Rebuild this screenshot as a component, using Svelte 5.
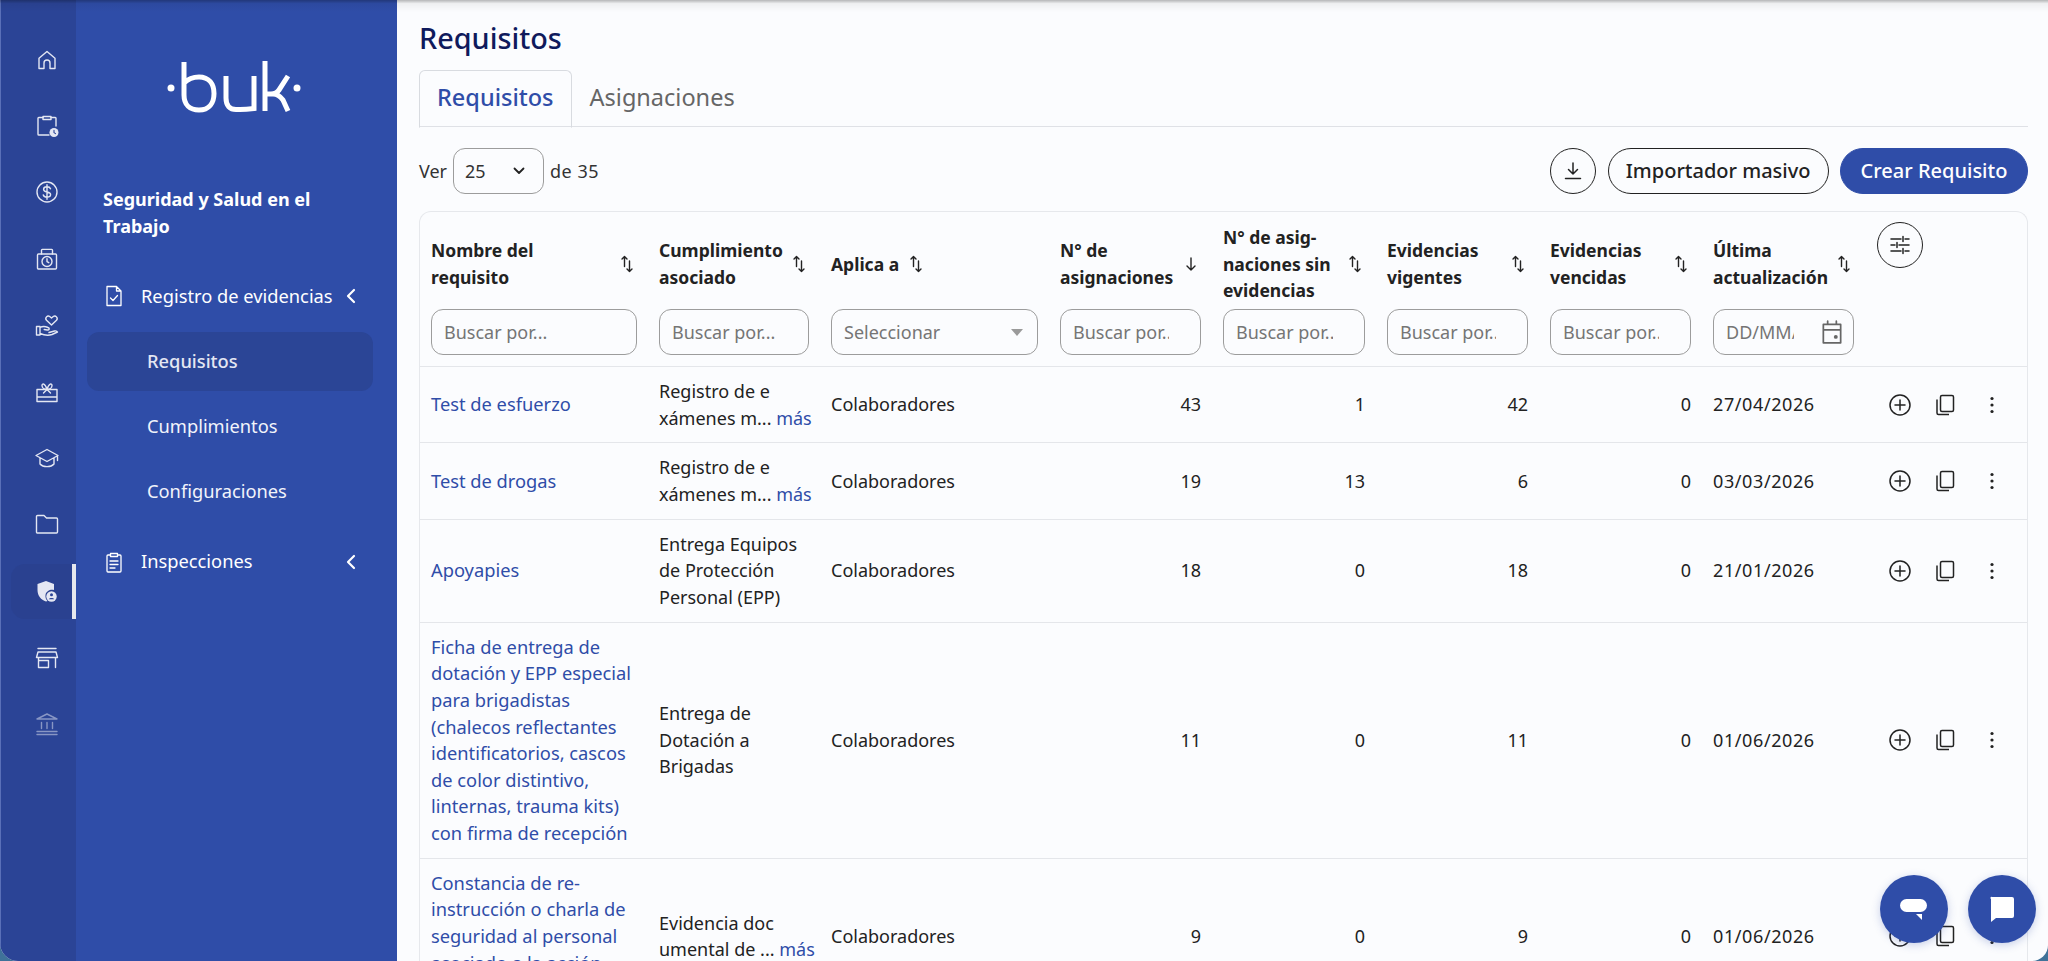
<script>
	const railIcons = ['home', 'clip', 'money', 'lock', 'care', 'gift', 'cap', 'folder', 'shield', 'store', 'bank'];

	const filters = [
		{ label: ['Nombre del', 'requisito'], sort: 'both' },
		{ label: ['Cumplimiento', 'asociado'], sort: 'both' },
		{ label: ['Aplica a'], sort: 'both', near: true, kind: 'select' },
		{ label: ['N° de', 'asignaciones'], sort: 'down' },
		{ label: ['N° de asig-', 'naciones sin', 'evidencias'], sort: 'both' },
		{ label: ['Evidencias', 'vigentes'], sort: 'both' },
		{ label: ['Evidencias', 'vencidas'], sort: 'both' },
		{ label: ['Última', 'actualización'], sort: 'both', kind: 'date' }
	];

	const rows = [
		{ name: ['Test de esfuerzo'], comp: ['Registro de e', 'xámenes m...'], more: true, n: [43, 1, 42, 0], date: '27/04/2026' },
		{ name: ['Test de drogas'], comp: ['Registro de e', 'xámenes m...'], more: true, n: [19, 13, 6, 0], date: '03/03/2026' },
		{ name: ['Apoyapies'], comp: ['Entrega Equipos', 'de Protección', 'Personal (EPP)'], n: [18, 0, 18, 0], date: '21/01/2026' },
		{
			name: ['Ficha de entrega de', 'dotación y EPP especial', 'para brigadistas', '(chalecos reflectantes', 'identificatorios, cascos', 'de color distintivo,', 'linternas, trauma kits)', 'con firma de recepción'],
			comp: ['Entrega de', 'Dotación a', 'Brigadas'], n: [11, 0, 11, 0], date: '01/06/2026'
		},
		{
			name: ['Constancia de re-', 'instrucción o charla de', 'seguridad al personal', 'asociado a la acción', 'correctiva'],
			comp: ['Evidencia doc', 'umental de ...'], more: true, n: [9, 0, 9, 0], date: '01/06/2026'
		}
	];
</script>

{#snippet railIcon(name)}
	<svg viewBox="0 0 24 24" width="24" height="24" fill="none" stroke="currentColor" stroke-width="1.4" stroke-linecap="round" stroke-linejoin="round">
		{#if name === 'home'}
			<path d="M4 20.5V10.2L12 3.5l8 6.7v10.3h-5V15a3 3 0 0 0-6 0v5.500z" />
		{:else if name === 'clip'}
			<path d="M8 3.500H3.800a.8.8 0 0 0-.8.8v15.900a.8.8 0 0 0 .8.8H14M16 3.500h4.200a.8.8 0 0 1 .8.8V12" />
			<path d="M8 2.500h8V5.500H8z" />
			<circle cx="19" cy="18.500" r="4.500" fill="currentColor" stroke="none" />
			<path d="M19 16.200v2.400l1.500 1" stroke="#2b4496" stroke-width="1.100" />
		{:else if name === 'money'}
			<circle cx="12" cy="12" r="10" />
			<path d="M15.500 8.800C15 7.300 13.600 6.800 12 6.800c-1.900 0-3.400 1-3.400 2.600 0 3.500 7 1.700 7 5.200 0 1.600-1.600 2.600-3.600 2.600-1.700 0-3.200-.7-3.700-2.200M12 4.800v14.400" />
		{:else if name === 'lock'}
			<rect x="2.500" y="7" width="19" height="15" rx="1" />
			<path d="M6.500 7V3.200a.8.800 0 0 1 .8-.8h9.400a.8.800 0 0 1 .8.8V7" />
			<circle cx="12" cy="14.500" r="5" />
			<path d="M12 11.800v2.900l1.800 1" />
		{:else if name === 'care'}
			<path d="M16.500 12l-5-4.800c-2-2.200 1-5.500 3.200-3.700l1.800 1.600 1.800-1.600c2.200-1.800 5.200 1.500 3.200 3.700z" />
			<path d="M1.500 13.500H5V22H1.500zM5 14.500c3-1.800 5-1.400 8 0 2 .8 1.200 2.800-.8 2.500l-3-.5M5 20.500c4 1.700 9 2 12 1l5.500-2.500c-.5-1-1.500-1.400-3-1l-5.500 1.500" />
		{:else if name === 'gift'}
			<path d="M2 9.500h20V21.500H2zM2 17h20" />
			<path d="M12 9.500C9 9.500 7 7.500 7 5.500c0-2.200 3-2.500 5 4 2-6.500 5-6.200 5-4 0 2-2 4-5 4zM12 9.500l-3.500 3.500M12 9.500l3.500 3.500" />
		{:else if name === 'cap'}
			<path d="M12 3.500L23 9.500l-11 6-11-6zM5 12v6c3 3.500 11 3.500 14 0v-6M22.500 9.500v5" />
		{:else if name === 'folder'}
			<path d="M1.500 4.500a1 1 0 0 1 1-1H9l2.500 2.500h10a1 1 0 0 1 1 1V20a1 1 0 0 1-1 1h-19a1 1 0 0 1-1-1z" />
		{:else if name === 'shield'}
			<path d="M12 2l8 3v6c-3.500-1-8 1-8.500 5-.3 2.500.5 4.500 2 6-.5.300-1 .5-1.500.5C7 21 3.500 16.500 3.500 11V5z" fill="currentColor" stroke="none" />
			<circle cx="17.500" cy="17.500" r="5.200" fill="currentColor" stroke="none" />
			<circle cx="17.500" cy="15.800" r="1.500" fill="#2b4496" stroke="none" />
			<path d="M14.800 20.300c.6-1.800 4.800-1.800 5.400 0z" fill="#2b4496" stroke="none" />
		{:else if name === 'store'}
			<path d="M3 2.500h18M3 6h18l1.500 5.500h-21zM3.500 11.500V21.500h10V14.500H3.500M20.500 11.500V21.500" />
		{:else}
			<path d="M12 2l10 5H2zM2 22.500h20M2 19.500h20M6.500 10.500v6M12 10.500v6M17.500 10.500v6" />
		{/if}
	</svg>
{/snippet}

{#snippet sortIcon(kind)}
	<svg class="sort" viewBox="0 0 20 20" width="20" height="20" fill="none" stroke="#222" stroke-width="1.400" stroke-linecap="round" stroke-linejoin="round">
		{#if kind === 'down'}
			<path d="M10 4v12M6 12l4 4 4-4" />
		{:else}
			<path d="M7.500 2.500v10M5 5L7.500 2.500 10 5" />
			<path d="M12.500 7v10.500M10 15l2.500 2.500 2.500-2.500" />
		{/if}
	</svg>
{/snippet}

<div class="shell">
	<nav class="rail">
		{#each railIcons as icon}
			<a class="rail-item" class:active={icon === 'shield'} class:off={icon === 'bank'} href="#top" aria-label={icon}>
				{@render railIcon(icon)}
			</a>
		{/each}
	</nav>

	<aside class="sidebar">
		<div class="logo">
			<svg viewBox="0 0 136 54" width="136" height="54" fill="none" stroke="#fff" stroke-width="5" aria-label="buk">
				<circle cx="4" cy="28" r="3.500" fill="#fff" stroke="none" />
				<path d="M17 2v33c0 10 6 15 15 15 10 0 15-7 15-16.500S42 17 32 17c-6 0-11 2-15 6" />
				<path d="M59 16v22c0 8 4 11.500 10 11.500h4c6 0 14-1 14-1V16" />
				<path d="M98 1v50M98 34h6c4 0 6-1 8-4l9-14M106 34c4 0 7 2 10 6l5 11" />
				<circle cx="130" cy="28" r="3.500" fill="#fff" stroke="none" />
			</svg>
		</div>

		<h2 class="module">Seguridad y Salud en el<br />Trabajo</h2>

		<div class="group">
			<svg viewBox="0 0 24 24" width="24" height="24" fill="none" stroke="#fff" stroke-width="1.300" stroke-linejoin="round" stroke-linecap="round">
				<path d="M5 2.500h9.500L19 7v14.500H5zM14.500 2.500V7H19M8.500 14l2.500 2.500 4.500-5" />
			</svg>
			<span>Registro de evidencias</span>
			<svg class="chev" viewBox="0 0 12 18" width="12" height="18" fill="none" stroke="#fff" stroke-width="2.200" stroke-linecap="round" stroke-linejoin="round"><path d="M9 3L3 9l6 6" /></svg>
		</div>
		<a class="sub active" href="#top">Requisitos</a>
		<a class="sub" href="#top">Cumplimientos</a>
		<a class="sub" href="#top">Configuraciones</a>
		<div class="group second">
			<svg viewBox="0 0 24 24" width="24" height="24" fill="none" stroke="#fff" stroke-width="1.300" stroke-linejoin="round" stroke-linecap="round">
				<path d="M8.500 5H6a1 1 0 0 0-1 1v15a1 1 0 0 0 1 1h12a1 1 0 0 0 1-1V6a1 1 0 0 0-1-1h-2.500" />
				<path d="M8.500 3.500h7v3h-7zM8 11h8M8 14.500h8M8 18h5" />
			</svg>
			<span>Inspecciones</span>
			<svg class="chev" viewBox="0 0 12 18" width="12" height="18" fill="none" stroke="#fff" stroke-width="2.200" stroke-linecap="round" stroke-linejoin="round"><path d="M9 3L3 9l6 6" /></svg>
		</div>
	</aside>

	<main class="main">
		<h1>Requisitos</h1>

		<div class="tabs">
			<button class="tab active">Requisitos</button>
			<button class="tab">Asignaciones</button>
		</div>

		<div class="toolbar">
			<div class="pager">
				<span>Ver</span>
				<div class="page-select">
					<span>25</span>
					<svg viewBox="0 0 12 8" width="12" height="8" fill="none" stroke="#222" stroke-width="1.800" stroke-linecap="round" stroke-linejoin="round"><path d="M1.500 1.500L6 6l4.500-4.500" /></svg>
				</div>
				<span class="total">de 35</span>
			</div>
			<div class="buttons">
				<button class="round" aria-label="Descargar">
					<svg viewBox="0 0 24 24" width="24" height="24" fill="none" stroke="#222" stroke-width="1.500" stroke-linecap="round" stroke-linejoin="round">
						<path d="M12 4v11M7.500 10.500L12 15l4.500-4.500M4.500 19.500h15" />
					</svg>
				</button>
				<button class="pill">Importador masivo</button>
				<button class="pill primary">Crear Requisito</button>
			</div>
		</div>

		<div class="card">
			<table>
				<colgroup>
					<col style="width: 228px" />
					<col style="width: 172px" />
					<col style="width: 229px" />
					<col style="width: 163px" />
					<col style="width: 164px" />
					<col style="width: 163px" />
					<col style="width: 163px" />
					<col style="width: 163px" />
					<col />
				</colgroup>
				<thead>
					<tr>
						{#each filters as f}
							<th>
								<div class="head" class:near={f.near}>
									<span>
										{#each f.label as line, i}{#if i > 0}<br />{/if}{line}{/each}
									</span>
									{@render sortIcon(f.sort)}
								</div>
								{#if f.kind === 'select'}
									<div class="field select">
										<span>Seleccionar</span>
										<i class="caret"></i>
									</div>
								{:else if f.kind === 'date'}
									<div class="field date">
										<span>DD/MM/AAAA</span>
										<svg viewBox="0 0 24 24" width="26" height="26" fill="none" stroke="#666" stroke-width="1.600" stroke-linecap="round" stroke-linejoin="round">
											<path d="M4 5h16v17H4zM4 10h16M8 2v3M16 2v3" />
											<circle cx="15.500" cy="16.500" r="1.800" fill="#666" stroke="none" />
										</svg>
									</div>
								{:else}
									<input class="field" placeholder="Buscar por..." />
								{/if}
							</th>
						{/each}
						<th class="tools">
							<button class="round" aria-label="Columnas">
								<svg viewBox="0 0 24 24" width="24" height="24" fill="none" stroke="#222" stroke-width="1.500" stroke-linecap="round">
									<path d="M3 6h10M17 6h4M15 3.500v5M3 12h4M11 12h10M9 9.500v5M3 18h10M17 18h4M15 15.500v5" />
								</svg>
							</button>
						</th>
					</tr>
				</thead>
				<tbody>
					{#each rows as row}
						<tr>
							<td class="name"><a href="#top">{#each row.name as line, i}{#if i > 0}<br />{/if}{line}{/each}</a></td>
							<td>
								{#each row.comp as line, i}{#if i > 0}<br />{/if}{line}{/each}{#if row.more}&nbsp;<a href="#top">más</a>{/if}
							</td>
							<td>Colaboradores</td>
							{#each row.n as value}
								<td class="num">{value}</td>
							{/each}
							<td class="day">{row.date}</td>
							<td class="actions">
								<div class="action-row">
									<svg viewBox="0 0 24 24" width="24" height="24" fill="none" stroke="#222" stroke-width="1.500" stroke-linecap="round"><circle cx="12" cy="12" r="10" /><path d="M12 7v10M7 12h10" /></svg>
									<svg viewBox="0 0 24 24" width="24" height="24" fill="none" stroke="#222" stroke-width="1.500" stroke-linejoin="round"><rect x="7.500" y="2.500" width="13" height="16" rx="1.500" /><path d="M4 6.500v13.500a1.500 1.500 0 0 0 1.500 1.500H16" /></svg>
									<svg class="dots" viewBox="0 0 24 24" width="24" height="24" fill="#222"><circle cx="12" cy="5.500" r="1.600" /><circle cx="12" cy="12" r="1.600" /><circle cx="12" cy="18.500" r="1.600" /></svg>
								</div>
							</td>
						</tr>
					{/each}
				</tbody>
			</table>
		</div>
	</main>

	<button class="fab one" aria-label="Ayuda">
		<svg viewBox="0 0 30 24" width="30" height="24" fill="#fff"><rect x="1" y="2" width="27" height="13" rx="6.500" /><path d="M17 17h6v6z" /></svg>
	</button>
	<button class="fab two" aria-label="Chat">
		<svg viewBox="0 0 26 26" width="26" height="26" fill="#fff"><path d="M3 1h20a2 2 0 0 1 2 2v17a2 2 0 0 1-2 2H7l-5 4V3a1 1 0 0 1 1-2z" /></svg>
	</button>
</div>

<style>
	:global(body) {
		margin: 0;
		background: #3f7299;
		overflow: hidden;
	}

	* {
		box-sizing: border-box;
	}

	.shell {
		position: relative;
		display: flex;
		height: 961px;
		overflow: hidden;
		border-radius: 0 0 16px 18px;
		background: #fbfcfe;
		font-family: 'Noto Sans', 'Liberation Sans', sans-serif;
		font-size: 18px;
		line-height: 26.6px;
		color: #222;
	}

	.shell::after {
		content: '';
		position: absolute;
		top: 0;
		left: 0;
		right: 0;
		height: 12px;
		background: linear-gradient(rgba(0, 0, 0, 0.28), rgba(0, 0, 0, 0.05) 30%, rgba(0, 0, 0, 0));
		pointer-events: none;
	}

	a {
		color: #2f4da8;
		text-decoration: none;
	}

	button {
		font: inherit;
		cursor: pointer;
	}

	.rail {
		flex: 0 0 76px;
		padding-top: 26.5px;
		background: #2b4496;
		border-left: 1px solid #5a70b8;
	}

	.rail-item {
		display: flex;
		align-items: center;
		justify-content: center;
		height: 66.400px;
		margin-left: 17px;
		color: #e4e7f3;
	}

	.rail-item.active {
		height: 55px;
		margin: 6px 0 6px 10px;
		padding-left: 9px;
		border-right: 4px solid #e6e8ee;
		border-radius: 14px 0 0 14px;
		background: #2a4190;
	}

	.rail-item.off {
		opacity: 0.5;
	}

	.sidebar {
		flex: 0 0 321px;
		padding: 0 24px 0 11px;
		background: #2f4da8;
		color: #fff;
	}

	.logo {
		display: flex;
		justify-content: center;
		padding: 60px 0 0 10px;
		height: 114px;
	}

	.module {
		margin: 72px 0 0 16px;
		font-size: 18px;
		font-weight: 700;
		line-height: 26.600px;
	}

	.group {
		display: flex;
		align-items: center;
		height: 40px;
		margin-top: 37px;
		padding-left: 15px;
		font-size: 18.300px;
		color: #fff;
	}

	.group span {
		margin-left: 15px;
	}

	.chev {
		margin-left: auto;
		margin-right: 16px;
	}

	.group.second {
		margin-top: 21px;
	}

	.sub {
		display: flex;
		align-items: center;
		height: 59px;
		margin-top: 5.700px;
		padding-left: 60px;
		border-radius: 12px;
		font-size: 18.300px;
		color: #f2f4fb;
	}

	.group + .sub {
		margin-top: 16px;
	}

	.sub.active {
		background: #2b4596;
		color: #e4e7f3;
		font-weight: 500;
	}

	.main {
		flex: 1;
		min-width: 0;
		padding: 0 20px 0 22px;
	}

	h1 {
		margin: 18px 0 0;
		font-size: 28.800px;
		font-weight: 500;
		line-height: 40px;
		color: #0f1a5c;
	}

	.tabs {
		display: flex;
		align-items: flex-end;
		height: 58px;
		margin-top: 11px;
		border-bottom: 1.500px solid #dfe1e6;
	}

	.tab {
		height: 58px;
		padding: 0 17px 2px;
		border: 1.500px solid transparent;
		border-radius: 6px 6px 0 0;
		background: none;
		font-size: 23.500px;
		color: #666;
		margin-bottom: -1.500px;
	}

	.tab.active {
		border-color: #d8dbe0;
		border-bottom-color: #fbfcfe;
		color: #2f4da8;
		font-weight: 500;
	}

	.toolbar {
		display: flex;
		align-items: center;
		justify-content: space-between;
		height: 46px;
		margin-top: 21px;
	}

	.pager {
		display: flex;
		align-items: center;
		gap: 6px;
		color: #333;
	}

	.total {
		letter-spacing: 0.5px;
	}

	.page-select {
		display: flex;
		align-items: center;
		justify-content: space-between;
		width: 91px;
		height: 46px;
		padding: 0 18px 0 11px;
		border: 1.500px solid #9c9c9c;
		border-radius: 12px;
	}

	.buttons {
		display: flex;
		gap: 11.500px;
	}

	.round {
		display: flex;
		align-items: center;
		justify-content: center;
		width: 46px;
		height: 46px;
		padding: 0;
		border: 1.500px solid #222;
		border-radius: 50%;
		background: none;
	}

	.pill {
		height: 46px;
		padding: 0 17px;
		border: 1.500px solid #222;
		border-radius: 23px;
		background: none;
		font-size: 20px;
		font-weight: 500;
		color: #222;
	}

	.pill.primary {
		padding: 0 19.600px;
		border-color: #2f4da8;
		background: #2f4da8;
		color: #fff;
	}

	.card {
		margin-top: 17px;
		border: 1.500px solid #e6e8ec;
		border-bottom: none;
		border-radius: 12px 12px 0 0;
	}

	table {
		width: 100%;
		border-collapse: collapse;
		table-layout: fixed;
	}

	th {
		padding: 12px 11px 11px;
		border-bottom: 1.500px solid #e4e6ea;
		vertical-align: top;
		text-align: left;
		font-weight: 700;
		font-size: 17.500px;
	}

	.head {
		display: flex;
		align-items: center;
		justify-content: space-between;
		height: 80px;
		margin-bottom: 5px;
	}

	.head.near {
		justify-content: flex-start;
		gap: 7px;
	}

	.sort {
		flex: none;
	}

	.field {
		display: flex;
		align-items: center;
		width: 100%;
		height: 46px;
		padding: 0 31px 0 12px;
		border: 1.500px solid #9c9c9c;
		border-radius: 12px;
		background: none;
		font: inherit;
		font-weight: 400;
		font-size: 18px;
		color: #757575;
		outline: none;
	}

	.field::placeholder {
		color: #757575;
		opacity: 1;
	}

	.select {
		justify-content: space-between;
		padding-right: 12px;
	}

	.caret {
		width: 0;
		height: 0;
		margin-right: 2px;
		border: 6.500px solid transparent;
		border-top: 7px solid #9a9a9a;
		border-bottom: none;
	}

	.date {
		justify-content: space-between;
		padding-right: 8px;
		overflow: hidden;
	}

	.date span {
		flex: 0 0 68px;
		overflow: hidden;
		white-space: nowrap;
	}

	.tools {
		padding: 10px 0 0 12px;
	}

	td {
		padding: 11.100px 11px;
		border-bottom: 1.500px solid #e4e6ea;
		vertical-align: middle;
		white-space: nowrap;
	}

	.name {
		font-size: 18.300px;
	}

	.num {
		text-align: right;
	}

	.day {
		letter-spacing: 0.6px;
	}

	.action-row {
		display: flex;
		gap: 21px;
		padding-left: 12px;
	}

	.dots {
		margin-left: 2px;
	}

	.fab {
		position: absolute;
		top: 875px;
		display: flex;
		align-items: center;
		justify-content: center;
		width: 68px;
		height: 68px;
		padding: 0;
		border: none;
		border-radius: 50%;
		background: #2f4da8;
		box-shadow: 0 2px 8px rgba(47, 77, 168, 0.25);
	}

	.fab.one {
		left: 1880px;
	}

	.fab.two {
		left: 1968px;
	}
</style>
